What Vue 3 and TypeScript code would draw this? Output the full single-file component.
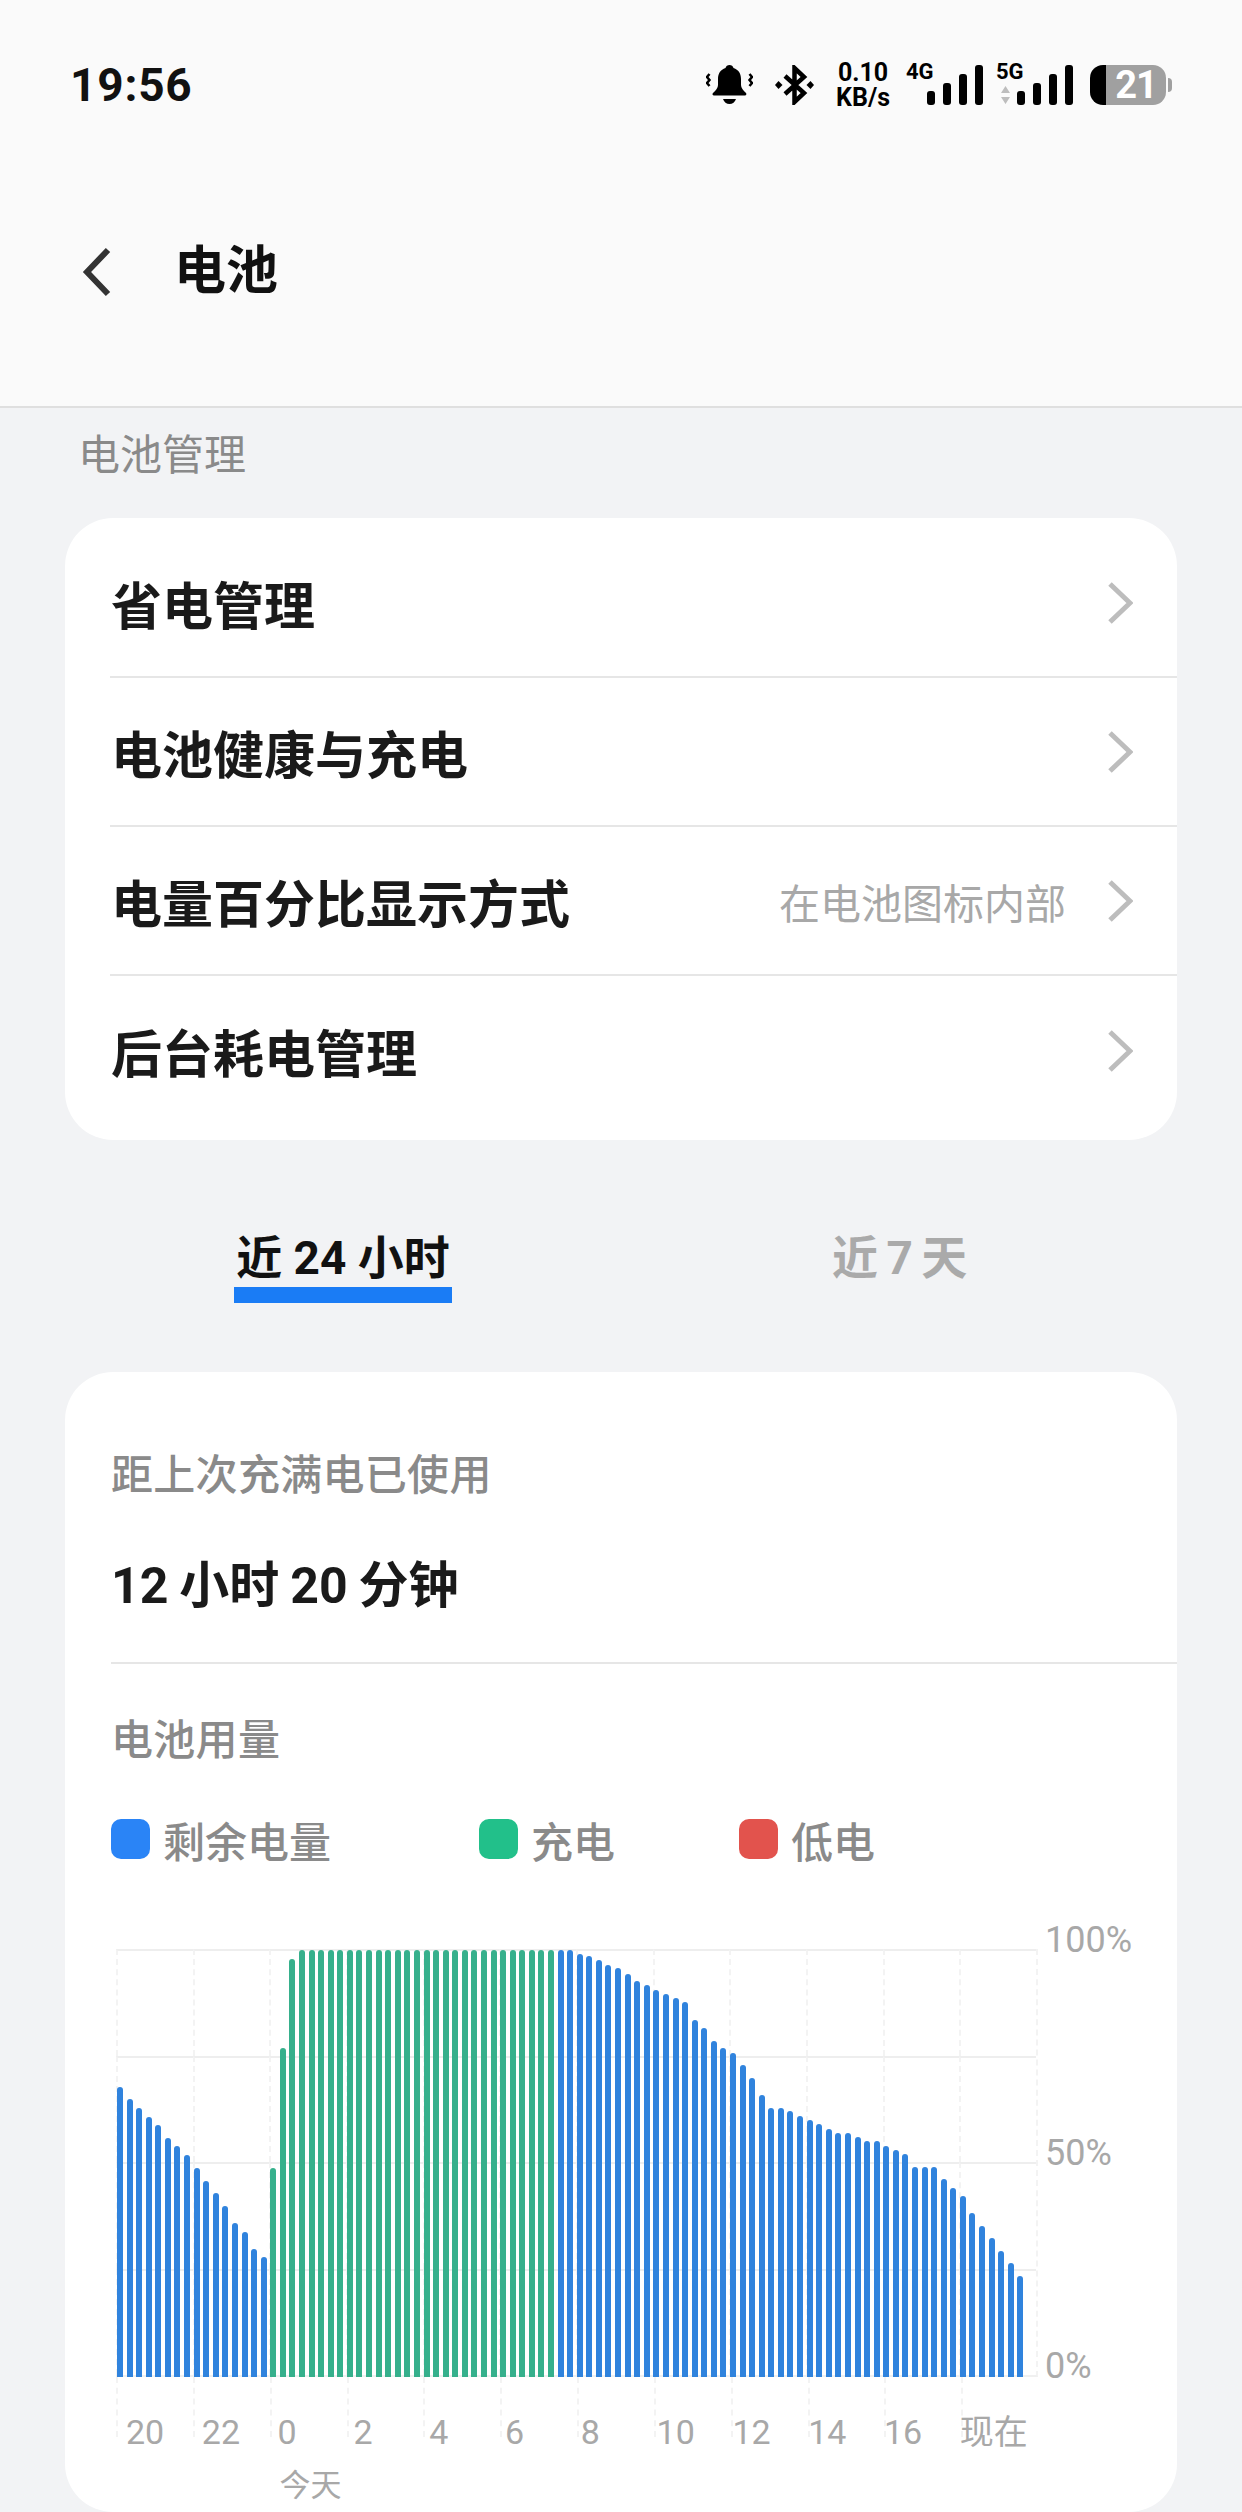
<script setup lang="ts">
const rows = [
  { title: '省电管理', value: '' },
  { title: '电池健康与充电', value: '' },
  { title: '电量百分比显示方式', value: '在电池图标内部' },
  { title: '后台耗电管理', value: '' },
]

const legend = [
  { label: '剩余电量', color: '#2a84f6', width: '368px' },
  { label: '充电', color: '#22c08a', width: '260px' },
  { label: '低电', color: '#e2534d', width: 'auto' },
]

const before = [68, 65, 63, 61, 59, 56, 54, 52, 49, 46, 43, 40, 36, 34, 30, 28]
const charging = [49, 77, 98, ...Array(27).fill(100)]
const after = [
  100, 100, 99, 98.5, 97.6, 96.6, 95.8, 94.5, 92.7, 91.9, 90.7, 89.6, 88.8, 87.9, 83.6, 81.8,
  78.8, 77, 75.8, 73.1, 70.1, 66.1, 63.1, 63.1, 62.2, 61.1, 60.2, 59.2, 58.2, 57.1, 57.1, 56.2,
  55.2, 55.2, 54.2, 53.2, 52.3, 49.3, 49.3, 49.3, 46.3, 44.3, 42.4, 38.4, 35.4, 32.6, 29.6, 26.6, 23.6,
]

const bars = [
  ...before.map((v) => ({ v, green: false })),
  ...charging.map((v) => ({ v, green: true })),
  ...after.map((v) => ({ v, green: false })),
]

const hours = ['20', '22', '0', '2', '4', '6', '8', '10', '12', '14', '16', '现在']
const signalBars = [14, 22, 31, 40]
</script>

<template>
  <div class="page">
    <header class="header">
      <div class="status">
        <span class="time">19:56</span>
        <div class="status-icons">
          <svg class="bell" width="47" height="40" viewBox="0 0 47 40">
            <path d="M23.5 0c2 0 3.5 1.3 4 3 5 1.6 7.5 5.6 7.5 11v6c0 3 2 5 5 8 .8 1 .2 2.5-1 2.5H8c-1.400 0-2-1.500-1-2.500 3-3 5-5 5-8v-6c0-5.400 2.500-9.400 7.500-11 .5-1.700 2-3 4-3z" fill="#000" />
            <path d="M17 34h13c-1 3-3.500 5-6.500 5s-5.500-2-6.500-5z" fill="#000" />
            <path d="M3.500 9l-2.500 3 2.500 3-2.500 3 2.500 3M43.500 9l2.500 3-2.500 3 2.500 3-2.500 3" fill="none" stroke="#000" stroke-width="2.500" />
          </svg>
          <svg class="bt" width="39" height="40" viewBox="0 0 39 40">
            <path d="M10 11l19 17-9.500 9V3l9.500 9-19 17" fill="none" stroke="#000" stroke-width="4.500" />
            <path d="M3.500 16l4 4-4 4-3.500-4zM35.500 16l3.500 4-3.500 4-4-4z" fill="#000" />
          </svg>
          <div class="speed"><span>0.10</span><span>KB/s</span></div>
          <div class="signal first">
            <span class="net">4G</span>
            <i v-for="h in signalBars" :key="h" :style="{ height: h + 'px' }"></i>
          </div>
          <div class="signal">
            <span class="net">5G</span>
            <svg class="arrows" width="9" height="20" viewBox="0 0 9 20">
              <path d="M4.500 1L9 8H0zM4.500 19L0 12h9z" fill="#bdbdbd" />
            </svg>
            <i v-for="h in signalBars" :key="h" :style="{ height: h + 'px' }"></i>
          </div>
          <div class="battery">
            <div class="battery-body"><span>21</span></div>
            <div class="battery-tip"></div>
          </div>
        </div>
      </div>
      <div class="nav">
        <svg width="30" height="50" viewBox="0 0 30 50">
          <polyline points="26,3 5,25 26,47" fill="none" stroke="#333" stroke-width="6" />
        </svg>
        <h1>电池</h1>
      </div>
    </header>

    <main class="content">
      <div class="section-title">电池管理</div>
      <section class="card list">
        <div v-for="row in rows" :key="row.title" class="row">
          <span class="row-title">{{ row.title }}</span>
          <span class="row-value">{{ row.value }}</span>
          <svg width="26" height="44" viewBox="0 0 26 44">
            <polyline points="3,3 23,22 3,41" fill="none" stroke="#bdbdbd" stroke-width="5" />
          </svg>
        </div>
      </section>

      <nav class="tabs">
        <div class="tab active"><span>近 24 小时</span></div>
        <div class="tab"><span>近 7 天</span></div>
      </nav>

      <section class="card usage">
        <div class="since">
          <div class="muted">距上次充满电已使用</div>
          <div class="duration">12 小时 20 分钟</div>
        </div>
        <div class="usage-body">
          <div class="muted">电池用量</div>
          <div class="legend">
            <div v-for="item in legend" :key="item.label" class="legend-item" :style="{ width: item.width }">
              <i :style="{ background: item.color }"></i>
              <span>{{ item.label }}</span>
            </div>
          </div>
          <div class="chart">
            <div class="plot-wrap">
              <div class="plot">
                <div class="grid">
                  <i v-for="n in 48" :key="n"></i>
                </div>
                <div class="bars">
                  <div
                    v-for="(bar, i) in bars"
                    :key="i"
                    class="bar"
                    :class="{ green: bar.green }"
                    :style="{ height: bar.v + '%' }"
                  ></div>
                </div>
              </div>
              <div class="axis">
                <div class="ticks">
                  <i v-for="h in hours" :key="h"></i>
                </div>
                <div v-for="h in hours" :key="h" class="tick">
                  <span>{{ h }}</span>
                  <span v-if="h === '0'" class="today">今天</span>
                </div>
              </div>
            </div>
            <div class="percent">
              <span>100%</span>
              <span>50%</span>
              <span>0%</span>
            </div>
          </div>
        </div>
      </section>
    </main>
  </div>
</template>

<style scoped>
.page {
  height: 2512px;
  overflow: hidden;
  display: flex;
  flex-direction: column;
  background: #f2f3f5;
  font-family: Roboto, "Noto Sans CJK SC", sans-serif;
  color: #1a1a1a;
}

.header {
  height: 408px;
  box-sizing: border-box;
  flex: none;
  background: #fafafa;
  border-bottom: 2px solid #dfdfdf;
  padding: 64px 70px 0 0;
}

.status {
  display: flex;
  justify-content: space-between;
  align-items: center;
  height: 42px;
  padding-left: 70px;
}

.time {
  font-size: 46px;
  font-weight: 700;
  color: #111;
  letter-spacing: 0.8px;
}

.status-icons {
  display: flex;
  align-items: center;
}

.bt {
  margin-left: 22px;
}

.speed {
  display: flex;
  flex-direction: column;
  align-items: center;
  margin-left: 22px;
  font-size: 25px;
  line-height: 25px;
  font-weight: 700;
  color: #000;
}

.signal {
  position: relative;
  display: flex;
  align-items: flex-end;
  gap: 8px;
  height: 40px;
  margin-left: 34px;
}

.signal.first {
  margin-left: 37px;
}

.signal i {
  width: 8px;
  border-radius: 3px;
  background: #000;
}

.net {
  position: absolute;
  left: -21px;
  top: -3px;
  font-size: 22px;
  line-height: 20px;
  font-weight: 700;
  color: #000;
}

.arrows {
  position: absolute;
  left: -16px;
  bottom: 0;
}

.battery {
  display: flex;
  align-items: center;
  margin-left: 17px;
}

.battery-body {
  width: 76px;
  height: 40px;
  border-radius: 13px;
  display: flex;
  align-items: center;
  justify-content: center;
  box-sizing: border-box;
  padding-left: 16px;
  background: linear-gradient(to right, #000 16px, #a0a0a0 16px);
  color: #fff;
  font-size: 38px;
  line-height: 40px;
  font-weight: 700;
  letter-spacing: -1px;
}

.battery-tip {
  width: 4px;
  height: 14px;
  margin-left: 2px;
  border-radius: 0 4px 4px 0;
  background: #a0a0a0;
}

.nav {
  display: flex;
  align-items: center;
  height: 60px;
  margin-top: 136px;
  padding-left: 82px;
}

.nav h1 {
  margin: 0 0 0 62px;
  font-size: 52px;
  line-height: 60px;
  font-weight: 700;
  color: #111;
}

.content {
  flex: 1;
  min-height: 0;
  display: flex;
  flex-direction: column;
  padding: 0 65px;
}

.section-title {
  height: 110px;
  padding: 25px 0 0 13px;
  box-sizing: border-box;
  font-size: 42px;
  line-height: 46px;
  color: #8a8a8a;
}

.card {
  background: #fff;
  border-radius: 48px;
}

.list {
  padding: 11px 0 15px;
}

.row {
  display: flex;
  align-items: center;
  height: 149px;
  margin-left: 45px;
  padding-right: 44px;
  border-bottom: 2px solid #e6e6e6;
  box-sizing: border-box;
}

.row:last-child {
  border-bottom: none;
}

.row-title {
  flex: 1;
  padding-left: 1px;
  font-size: 51px;
  font-weight: 700;
  color: #1a1a1a;
}

.row-value {
  margin-right: 41px;
  font-size: 41px;
  color: #a8a8a8;
}

.tabs {
  display: flex;
  height: 232px;
  flex: none;
}

.tab {
  position: relative;
  flex: none;
  padding-top: 87px;
  box-sizing: border-box;
  font-size: 46px;
  line-height: 62px;
  font-weight: 700;
  color: #aaa;
  word-spacing: -3px;
}

.tab:first-child {
  margin-left: 169px;
  width: 218px;
  text-align: center;
  word-spacing: 0;
}

.tab:last-child {
  margin-left: 380px;
}

.tab.active {
  color: #111;
}

.tab.active::after {
  content: "";
  position: absolute;
  left: 0;
  right: 0;
  top: 147px;
  height: 16px;
  background: #1a7cf5;
}

.usage {
  flex: 1;
  padding-left: 46px;
}

.since {
  height: 292px;
  box-sizing: border-box;
  padding-top: 78px;
  border-bottom: 2px solid #e6e6e6;
}

.muted {
  font-size: 42px;
  line-height: 52px;
  font-weight: 500;
  color: #8a8a8a;
  letter-spacing: 0.3px;
}

.duration {
  margin-top: 52px;
  font-size: 50px;
  line-height: 64px;
  font-weight: 700;
  color: #1a1a1a;
  word-spacing: -1.500px;
}

.usage-body {
  padding-top: 51px;
}

.legend {
  display: flex;
  margin-top: 47px;
  height: 50px;
}

.legend-item {
  display: flex;
  align-items: center;
  font-size: 42px;
  font-weight: 500;
  color: #8a8a8a;
}

.legend-item i {
  width: 39px;
  height: 40px;
  border-radius: 10px;
  margin-right: 13px;
}

.chart {
  display: flex;
  margin-top: 85px;
  margin-left: 5px;
}

.plot-wrap {
  width: 922px;
  flex: none;
}

.plot {
  position: relative;
  height: 428px;
}

.grid {
  position: absolute;
  inset: 0;
  display: grid;
  grid-template-columns: repeat(12, 1fr);
  grid-template-rows: repeat(4, 1fr);
  border-right: 2px dashed #f3f3f3;
  border-bottom: 2px solid #f0f0f0;
}

.grid i {
  border-top: 2px solid #eeeeee;
  border-left: 2px dashed #f3f3f3;
}

.bars {
  position: absolute;
  left: 1px;
  right: 14px;
  top: 1px;
  bottom: 0;
  display: flex;
  justify-content: space-between;
  align-items: flex-end;
}

.bar {
  width: 6px;
  border-radius: 3px 3px 0 0;
  background: #3083dd;
}

.bar.green {
  background: #36b08c;
}

.axis {
  position: relative;
  display: grid;
  grid-template-columns: repeat(12, 75.8px);
}

/* dashed ticks run on the plot's own 12 columns, the labels drift slightly tighter */
.ticks {
  position: absolute;
  inset: 0;
  display: grid;
  grid-template-columns: repeat(12, 1fr);
}

.ticks i {
  border-left: 2px dashed #f3f3f3;
  height: 60px;
}

.tick {
  position: relative;
  display: flex;
  flex-direction: column;
  height: 84px;
  box-sizing: border-box;
  padding-top: 35px;
  padding-left: 10px;
  font-size: 34px;
  line-height: 40px;
  color: #a8a8a8;
  white-space: nowrap;
}

.today {
  margin-top: 14px;
  margin-left: 2px;
  font-size: 31px;
}

.percent {
  display: flex;
  flex-direction: column;
  justify-content: space-between;
  height: 462px;
  margin-top: -27px;
  margin-left: 7px;
  font-size: 36px;
  line-height: 36px;
  color: #a8a8a8;
}
</style>

<style>
html,
body {
  background: #f2f3f5;
}
</style>
